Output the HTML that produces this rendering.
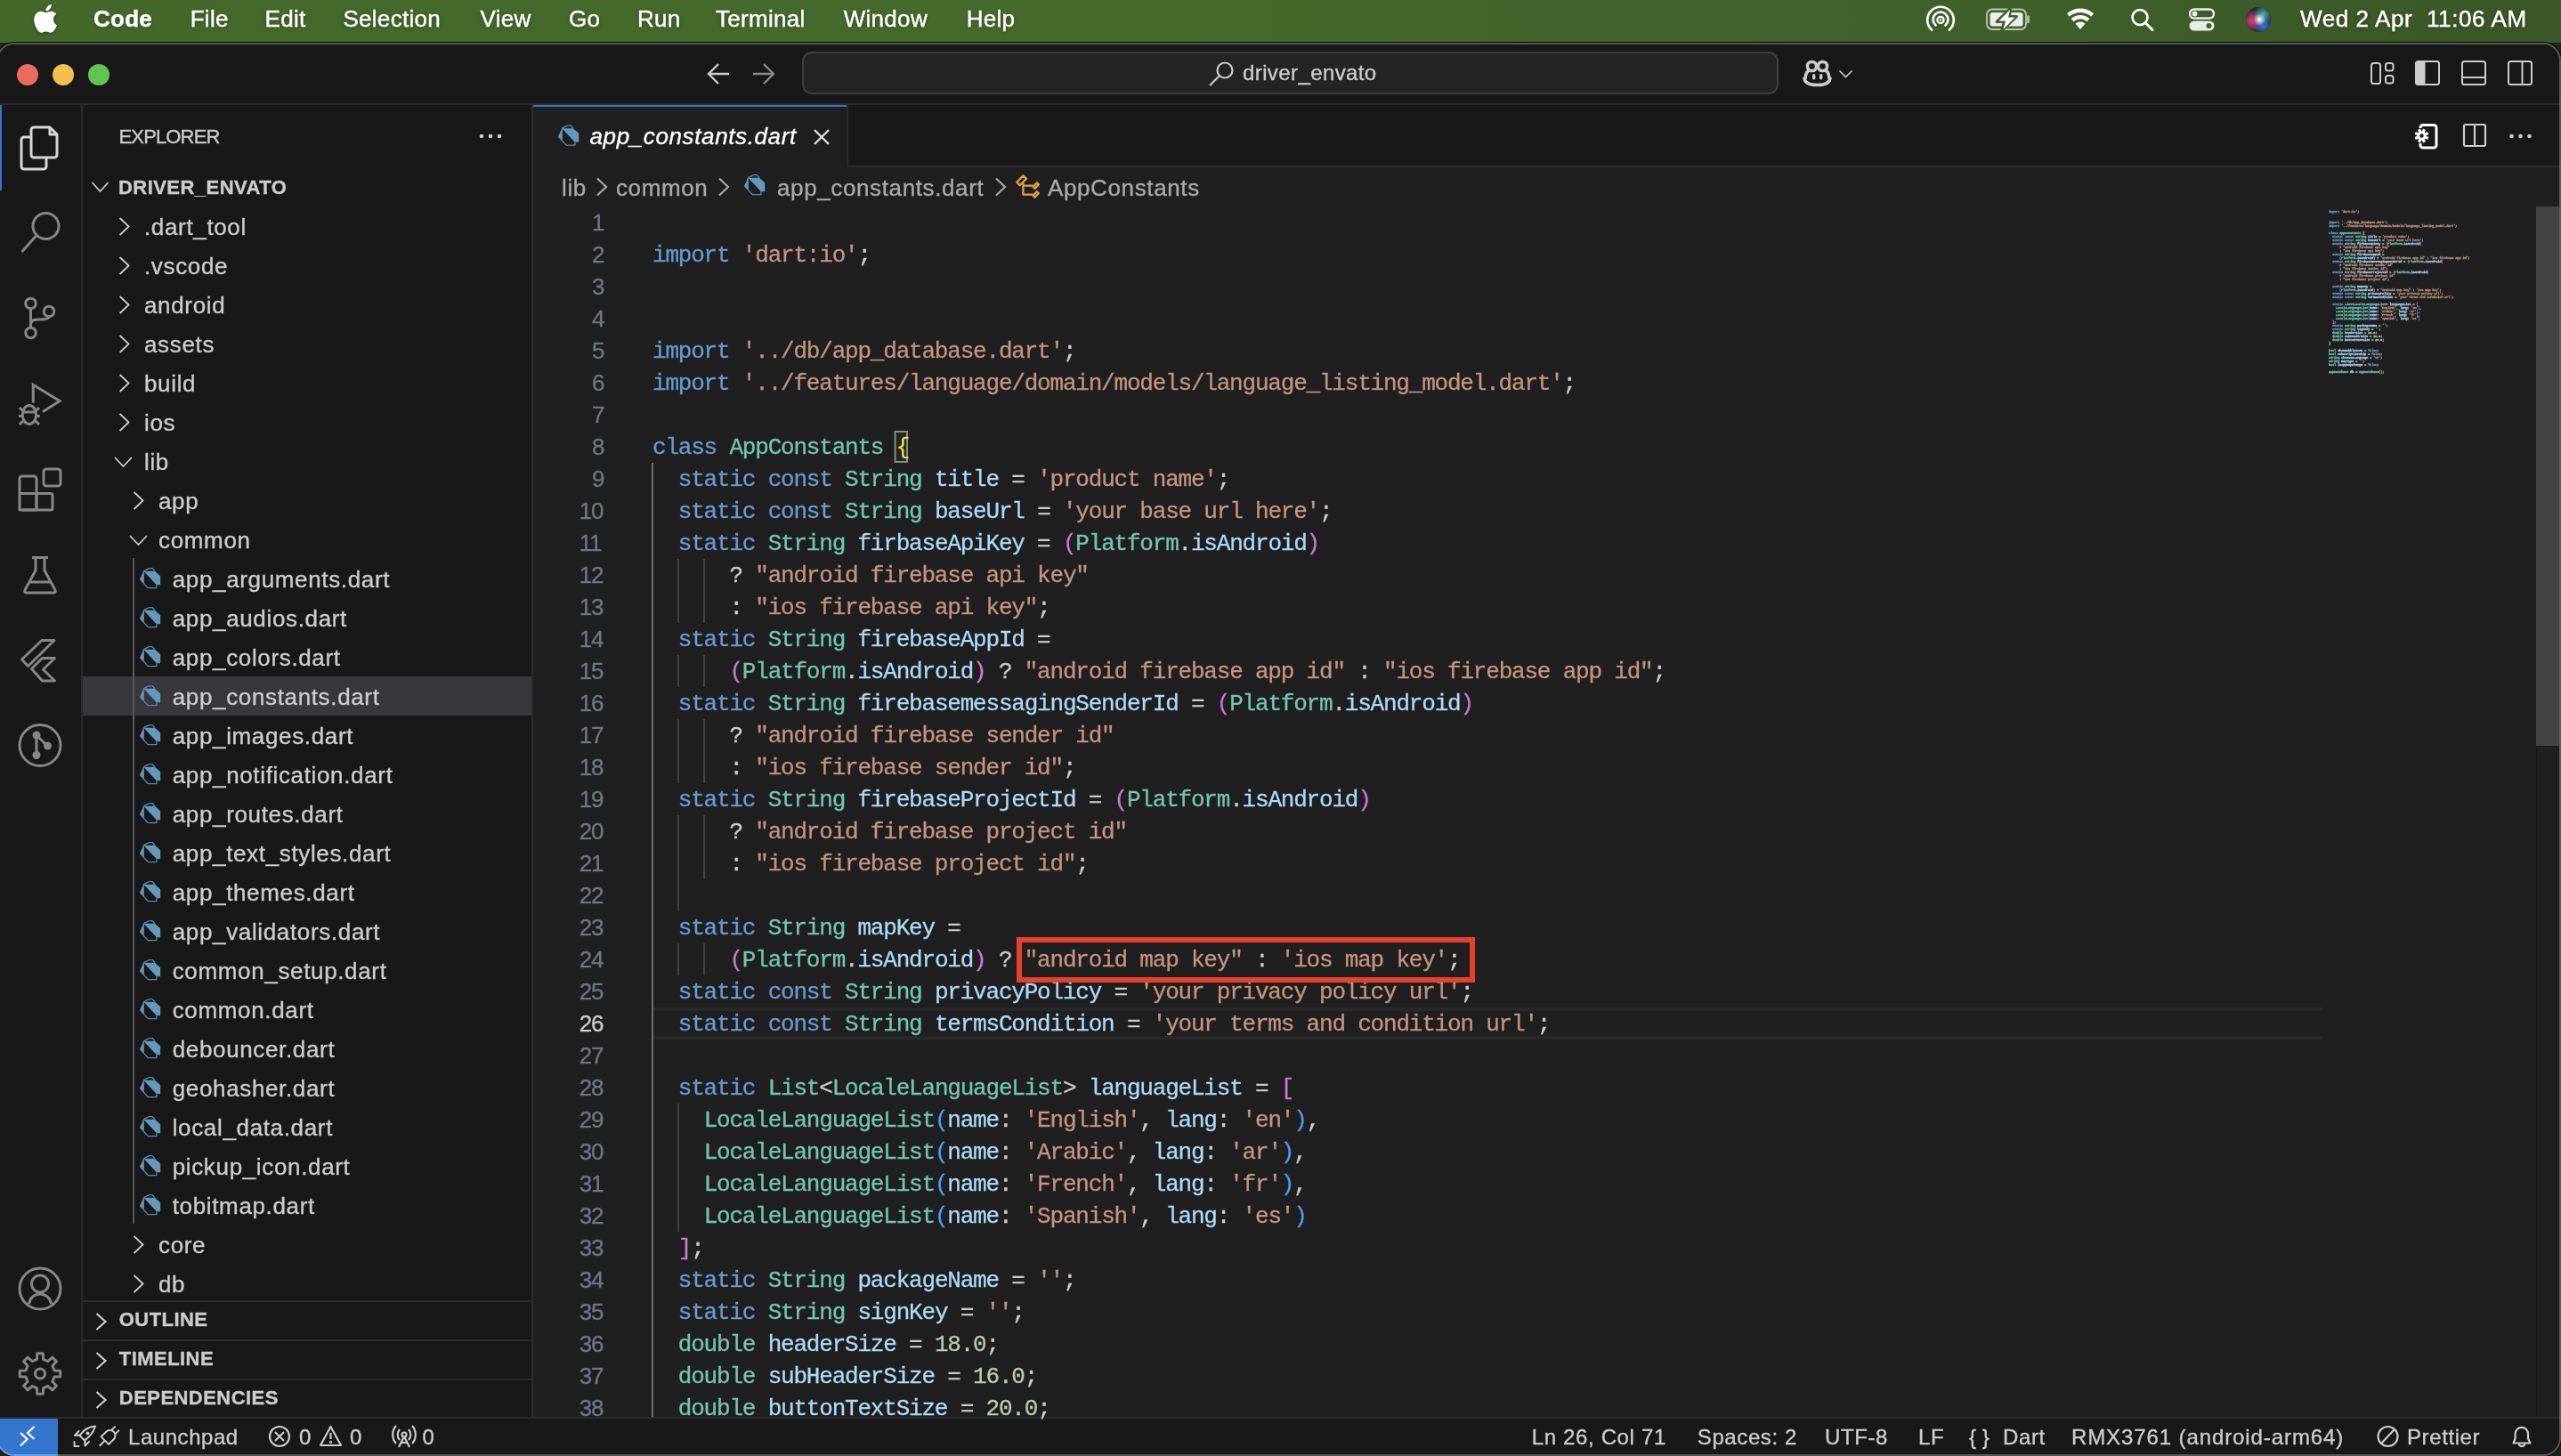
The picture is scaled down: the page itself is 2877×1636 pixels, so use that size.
<!DOCTYPE html>
<html><head><meta charset="utf-8"><style>
html,body{margin:0;padding:0;width:2877px;height:1636px;overflow:hidden;background:#1c2614;}
#menubar{position:absolute;left:0;top:0;width:2877px;height:48px;background:linear-gradient(90deg,#44682a 0%,#466a2b 40%,#41622a 70%,#3b5727 100%);}
#clip{position:absolute;left:-4px;top:48px;width:2881px;height:1588px;border-radius:20px;overflow:hidden;background:#181818;}
#inner{position:absolute;left:4px;top:-48px;width:2877px;height:1636px;will-change:transform;}
.t{position:absolute;white-space:pre;font-family:"Liberation Sans", sans-serif;-webkit-text-stroke:0.35px currentColor;}
.r{position:absolute;}
.code{font-family:"Liberation Mono", monospace;font-size:26px;letter-spacing:-1.2px;line-height:36px;color:#cccccc;-webkit-text-stroke:0.3px currentColor;}
.code span{-webkit-text-stroke:0.3px currentColor;}
#border{position:absolute;left:-4px;top:48px;width:2881px;height:1588px;border-radius:20px;box-sizing:border-box;border:2px solid rgba(255,255,255,0.27);box-shadow:0 0 0 1px rgba(0,0,0,0.85);pointer-events:none;}
svg{position:absolute;left:0;top:0;}
.mm{position:absolute;left:2616px;white-space:pre;font-family:"Liberation Mono", monospace;font-size:4px;line-height:4px;letter-spacing:-0.4px;color:#cccccc;-webkit-text-stroke:0.35px currentColor;opacity:0.9}
#mb .t{text-shadow:0 1px 4px rgba(0,0,0,0.35);-webkit-text-stroke:0.45px #fff;}
</style></head><body>
<div id="menubar"></div>
<div id="mb" style="position:absolute;left:0;top:0;width:2877px;height:48px;will-change:transform;">
<svg width="2877" height="48" viewBox="0 0 2877 48"><path transform="translate(1.5 0)" fill="#ffffff" style="filter:drop-shadow(0 1px 2px rgba(0,0,0,0.35))" d="M58.5 21.8c0-4 3.3-5.9 3.4-6-1.9-2.7-4.8-3.1-5.8-3.1-2.5-.3-4.8 1.4-6.1 1.4-1.3 0-3.2-1.4-5.3-1.4-2.7 0-5.2 1.6-6.6 4-2.8 4.9-.7 12.1 2 16 1.3 1.9 2.9 4.1 5 4 2-.1 2.8-1.3 5.2-1.3 2.4 0 3.1 1.3 5.2 1.3 2.2 0 3.5-2 4.8-3.9 1.5-2.2 2.1-4.4 2.2-4.5-.1 0-4-1.6-4-6.5zM54.6 10c1.1-1.4 1.9-3.2 1.7-5.1-1.6.1-3.6 1.1-4.7 2.5-1 1.2-1.9 3.1-1.7 4.9 1.8.2 3.6-.9 4.7-2.3z"/><g fill="none" stroke="#ffffff" stroke-width="2.6" stroke-linecap="round"><path d="M2170.2 33.6A14.8 14.8 0 1 1 2189.8 33.6"/><path d="M2174.5 28.3A8.4 8.4 0 1 1 2185.5 28.3"/><circle cx="2180" cy="22.4" r="3.6" stroke-width="2.2"/></g><circle cx="2180" cy="22.4" r="1.2" fill="#fff"/><rect x="2232" y="10.5" width="44" height="22.5" rx="6" fill="none" stroke="#b9c4b2" stroke-width="1.8"/><rect x="2235.5" y="14" width="37" height="15.5" rx="3" fill="#ebedea"/><path d="M2278.5 18.5v6.5" stroke="#b9c4b2" stroke-width="2.6" stroke-linecap="round"/><path d="M2258.5 9L2243 24.5H2251.5L2248.5 35L2265.5 18.5H2257.5Z" fill="#3f6028" stroke="#3f6028" stroke-width="3" stroke-linejoin="round"/><path d="M2258 11L2245.5 23.5H2253L2250.5 33L2263.5 19.5H2256Z" fill="#ffffff"/><g fill="#ffffff"><path d="M2337 33l-5.5-6.5a8.5 8.5 0 0 1 11 0z"/><path d="M2329.5 24.2l-2.8-3.3a15.5 15.5 0 0 1 20.6 0l-2.8 3.3a11.2 11.2 0 0 0 -15 0z"/><path d="M2324.8 18.6l-2.9-3.4a23 23 0 0 1 30.2 0l-2.9 3.4a18.5 18.5 0 0 0 -24.4 0z"/></g><circle cx="2404" cy="19.5" r="8.5" fill="none" stroke="#fff" stroke-width="2.6"/><path d="M2410.5 26L2418 33.5" stroke="#fff" stroke-width="3" stroke-linecap="round"/><rect x="2460" y="10.5" width="27" height="10" rx="5" fill="none" stroke="#e9ece7" stroke-width="2.4"/><circle cx="2465.5" cy="15.5" r="3" fill="#e9ece7"/><rect x="2459.5" y="23.5" width="28" height="11" rx="5.5" fill="#e9ece7"/><circle cx="2481.5" cy="29" r="3" fill="#3f6028"/><defs><radialGradient id="sg0" cx="50%" cy="50%" r="50%"><stop offset="0" stop-color="#3a3a5a"/><stop offset="1" stop-color="#222238"/></radialGradient><radialGradient id="sg1" cx="25%" cy="55%" r="45%"><stop offset="0" stop-color="#e8407a" stop-opacity="0.95"/><stop offset="1" stop-color="#e8407a" stop-opacity="0"/></radialGradient><radialGradient id="sg2" cx="70%" cy="30%" r="40%"><stop offset="0" stop-color="#40c8b8" stop-opacity="0.9"/><stop offset="1" stop-color="#40c8b8" stop-opacity="0"/></radialGradient><radialGradient id="sg3" cx="70%" cy="75%" r="40%"><stop offset="0" stop-color="#3a78e8" stop-opacity="0.95"/><stop offset="1" stop-color="#3a78e8" stop-opacity="0"/></radialGradient><radialGradient id="sg4" cx="55%" cy="50%" r="25%"><stop offset="0" stop-color="#ffffff" stop-opacity="1"/><stop offset="1" stop-color="#ffffff" stop-opacity="0"/></radialGradient></defs><circle cx="2537" cy="22" r="14" fill="url(#sg0)"/><circle cx="2537" cy="22" r="14" fill="url(#sg1)"/><circle cx="2537" cy="22" r="14" fill="url(#sg2)"/><circle cx="2537" cy="22" r="14" fill="url(#sg3)"/><circle cx="2537" cy="22" r="14" fill="url(#sg4)"/></svg>
<div class="t" style="left:105.0px;top:-5.5px;font-size:26px;line-height:52px;color:#ffffff;font-weight:bold;font-style:normal;letter-spacing:0.25px;font-family:"Liberation Sans", sans-serif;">Code</div>
<div class="t" style="left:213.7px;top:-5.5px;font-size:26px;line-height:52px;color:#ffffff;font-weight:normal;font-style:normal;letter-spacing:0.3px;font-family:"Liberation Sans", sans-serif;">File</div>
<div class="t" style="left:297.6px;top:-5.5px;font-size:26px;line-height:52px;color:#ffffff;font-weight:normal;font-style:normal;letter-spacing:0.3px;font-family:"Liberation Sans", sans-serif;">Edit</div>
<div class="t" style="left:385.4px;top:-5.5px;font-size:26px;line-height:52px;color:#ffffff;font-weight:normal;font-style:normal;letter-spacing:0.3px;font-family:"Liberation Sans", sans-serif;">Selection</div>
<div class="t" style="left:539.6px;top:-5.5px;font-size:26px;line-height:52px;color:#ffffff;font-weight:normal;font-style:normal;letter-spacing:0.3px;font-family:"Liberation Sans", sans-serif;">View</div>
<div class="t" style="left:639.0px;top:-5.5px;font-size:26px;line-height:52px;color:#ffffff;font-weight:normal;font-style:normal;letter-spacing:0.3px;font-family:"Liberation Sans", sans-serif;">Go</div>
<div class="t" style="left:716.0px;top:-5.5px;font-size:26px;line-height:52px;color:#ffffff;font-weight:normal;font-style:normal;letter-spacing:0.3px;font-family:"Liberation Sans", sans-serif;">Run</div>
<div class="t" style="left:804.0px;top:-5.5px;font-size:26px;line-height:52px;color:#ffffff;font-weight:normal;font-style:normal;letter-spacing:0.3px;font-family:"Liberation Sans", sans-serif;">Terminal</div>
<div class="t" style="left:947.7px;top:-5.5px;font-size:26px;line-height:52px;color:#ffffff;font-weight:normal;font-style:normal;letter-spacing:0.3px;font-family:"Liberation Sans", sans-serif;">Window</div>
<div class="t" style="left:1085.7px;top:-5.5px;font-size:26px;line-height:52px;color:#ffffff;font-weight:normal;font-style:normal;letter-spacing:0.3px;font-family:"Liberation Sans", sans-serif;">Help</div>
<div class="t" style="left:2584.0px;top:-5.0px;font-size:26px;line-height:52px;color:#ffffff;font-weight:normal;font-style:normal;letter-spacing:0.6px;font-family:"Liberation Sans", sans-serif;">Wed 2 Apr  11:06 AM</div>
</div>
<div id="clip"><div id="inner">
<div class="r" style="left:-10px;top:47px;width:2900px;height:70px;background:#181818;"></div>
<div class="r" style="left:-10px;top:116px;width:2900px;height:2px;background:#2b2b2b;"></div>
<div class="r" style="left:0px;top:118px;width:92px;height:1474px;background:#181818;"></div>
<div class="r" style="left:91px;top:118px;width:2px;height:1474px;background:#2b2b2b;"></div>
<div class="r" style="left:93px;top:118px;width:504px;height:1474px;background:#181818;"></div>
<div class="r" style="left:597px;top:118px;width:2px;height:1474px;background:#2b2b2b;"></div>
<div class="r" style="left:599px;top:118px;width:2280px;height:68px;background:#181818;"></div>
<div class="r" style="left:599px;top:186px;width:2280px;height:2px;background:#2b2b2b;"></div>
<div class="r" style="left:599px;top:118px;width:352px;height:70px;background:#1f1f1f;"></div>
<div class="r" style="left:599px;top:118px;width:352px;height:2px;background:#3376cd;"></div>
<div class="r" style="left:951px;top:118px;width:2px;height:68px;background:#2b2b2b;"></div>
<div class="r" style="left:599px;top:188px;width:2280px;height:1404px;background:#1f1f1f;"></div>
<div class="r" style="left:-10px;top:1592px;width:2900px;height:44px;background:#181818;"></div>
<div class="r" style="left:-10px;top:1592px;width:2900px;height:2px;background:#2b2b2b;"></div>
<div class="r" style="left:-10px;top:1594px;width:75px;height:42px;background:#3376cd;"></div>
<div class="r" style="left:0px;top:118px;width:2px;height:96px;background:#3376cd;"></div>
<div class="r" style="left:93px;top:760px;width:504px;height:44px;background:#37373c;"></div>
<div class="r" style="left:149px;top:627px;width:2px;height:748px;background:#585858;"></div>
<div class="r" style="left:93px;top:1461px;width:504px;height:2px;background:#2b2b2b;"></div>
<div class="r" style="left:93px;top:1505px;width:504px;height:2px;background:#2b2b2b;"></div>
<div class="r" style="left:93px;top:1549px;width:504px;height:2px;background:#2b2b2b;"></div>
<div class="r" style="left:732px;top:1132px;width:1877px;height:36px;background:transparent;border-top:4px solid #282828;border-bottom:4px solid #282828;box-sizing:border-box"></div>
<div class="r" style="left:732.0px;top:520px;width:2px;height:36px;background:#6e6e6e;"></div>
<div class="r" style="left:732.0px;top:556px;width:2px;height:36px;background:#6e6e6e;"></div>
<div class="r" style="left:732.0px;top:592px;width:2px;height:36px;background:#6e6e6e;"></div>
<div class="r" style="left:732.0px;top:628px;width:2px;height:36px;background:#6e6e6e;"></div>
<div class="r" style="left:732.0px;top:664px;width:2px;height:36px;background:#6e6e6e;"></div>
<div class="r" style="left:732.0px;top:700px;width:2px;height:36px;background:#6e6e6e;"></div>
<div class="r" style="left:732.0px;top:736px;width:2px;height:36px;background:#6e6e6e;"></div>
<div class="r" style="left:732.0px;top:772px;width:2px;height:36px;background:#6e6e6e;"></div>
<div class="r" style="left:732.0px;top:808px;width:2px;height:36px;background:#6e6e6e;"></div>
<div class="r" style="left:732.0px;top:844px;width:2px;height:36px;background:#6e6e6e;"></div>
<div class="r" style="left:732.0px;top:880px;width:2px;height:36px;background:#6e6e6e;"></div>
<div class="r" style="left:732.0px;top:916px;width:2px;height:36px;background:#6e6e6e;"></div>
<div class="r" style="left:732.0px;top:952px;width:2px;height:36px;background:#6e6e6e;"></div>
<div class="r" style="left:732.0px;top:988px;width:2px;height:36px;background:#6e6e6e;"></div>
<div class="r" style="left:732.0px;top:1024px;width:2px;height:36px;background:#6e6e6e;"></div>
<div class="r" style="left:732.0px;top:1060px;width:2px;height:36px;background:#6e6e6e;"></div>
<div class="r" style="left:732.0px;top:1096px;width:2px;height:36px;background:#6e6e6e;"></div>
<div class="r" style="left:732.0px;top:1132px;width:2px;height:36px;background:#6e6e6e;"></div>
<div class="r" style="left:732.0px;top:1168px;width:2px;height:36px;background:#6e6e6e;"></div>
<div class="r" style="left:732.0px;top:1204px;width:2px;height:36px;background:#6e6e6e;"></div>
<div class="r" style="left:732.0px;top:1240px;width:2px;height:36px;background:#6e6e6e;"></div>
<div class="r" style="left:732.0px;top:1276px;width:2px;height:36px;background:#6e6e6e;"></div>
<div class="r" style="left:732.0px;top:1312px;width:2px;height:36px;background:#6e6e6e;"></div>
<div class="r" style="left:732.0px;top:1348px;width:2px;height:36px;background:#6e6e6e;"></div>
<div class="r" style="left:732.0px;top:1384px;width:2px;height:36px;background:#6e6e6e;"></div>
<div class="r" style="left:732.0px;top:1420px;width:2px;height:36px;background:#6e6e6e;"></div>
<div class="r" style="left:732.0px;top:1456px;width:2px;height:36px;background:#6e6e6e;"></div>
<div class="r" style="left:732.0px;top:1492px;width:2px;height:36px;background:#6e6e6e;"></div>
<div class="r" style="left:732.0px;top:1528px;width:2px;height:36px;background:#6e6e6e;"></div>
<div class="r" style="left:732.0px;top:1564px;width:2px;height:28px;background:#6e6e6e;"></div>
<div class="r" style="left:760.8px;top:628px;width:2px;height:36px;background:#404040;"></div>
<div class="r" style="left:760.8px;top:664px;width:2px;height:36px;background:#404040;"></div>
<div class="r" style="left:760.8px;top:736px;width:2px;height:36px;background:#404040;"></div>
<div class="r" style="left:760.8px;top:808px;width:2px;height:36px;background:#404040;"></div>
<div class="r" style="left:760.8px;top:844px;width:2px;height:36px;background:#404040;"></div>
<div class="r" style="left:760.8px;top:916px;width:2px;height:36px;background:#404040;"></div>
<div class="r" style="left:760.8px;top:952px;width:2px;height:36px;background:#404040;"></div>
<div class="r" style="left:760.8px;top:1060px;width:2px;height:36px;background:#404040;"></div>
<div class="r" style="left:760.8px;top:988px;width:2px;height:36px;background:#404040;"></div>
<div class="r" style="left:760.8px;top:1240px;width:2px;height:36px;background:#404040;"></div>
<div class="r" style="left:760.8px;top:1276px;width:2px;height:36px;background:#404040;"></div>
<div class="r" style="left:760.8px;top:1312px;width:2px;height:36px;background:#404040;"></div>
<div class="r" style="left:760.8px;top:1348px;width:2px;height:36px;background:#404040;"></div>
<div class="r" style="left:789.6px;top:628px;width:2px;height:36px;background:#404040;"></div>
<div class="r" style="left:789.6px;top:664px;width:2px;height:36px;background:#404040;"></div>
<div class="r" style="left:789.6px;top:736px;width:2px;height:36px;background:#404040;"></div>
<div class="r" style="left:789.6px;top:808px;width:2px;height:36px;background:#404040;"></div>
<div class="r" style="left:789.6px;top:844px;width:2px;height:36px;background:#404040;"></div>
<div class="r" style="left:789.6px;top:916px;width:2px;height:36px;background:#404040;"></div>
<div class="r" style="left:789.6px;top:952px;width:2px;height:36px;background:#404040;"></div>
<div class="r" style="left:789.6px;top:1060px;width:2px;height:36px;background:#404040;"></div>
<div class="r" style="left:2849px;top:232px;width:26px;height:606px;background:#434343;"></div>
<div class="r" style="left:2849px;top:838px;width:1px;height:754px;background:#171717;"></div>
<svg width="2877" height="1636" viewBox="0 0 2877 1636"><circle cx="31" cy="84" r="12" fill="#ed6a5e"/><circle cx="71" cy="84" r="12" fill="#f4bf4f"/><circle cx="111" cy="84" r="12" fill="#61c554"/><path d="M819 83H796M807 72L796 83L807 94" stroke="#cccccc" stroke-width="2.4" fill="none"/><path d="M846 83H869M858 72L869 83L858 94" stroke="#8a8a8a" stroke-width="2.4" fill="none"/><rect x="902" y="59" width="1095" height="46" rx="10" fill="#242424" stroke="#3f3f3f" stroke-width="2"/><circle cx="1376" cy="79" r="8.5" stroke="#cccccc" stroke-width="2.2" fill="none"/><path d="M1370 85L1359 96" stroke="#cccccc" stroke-width="2.2"/><g fill="none" stroke="#cccccc" stroke-width="3.6" stroke-linejoin="round"><path d="M2028 89c0-5 1.5-8 4-10M2055 89c0-5-1.5-8-4-10"/><rect x="2030.5" y="69.5" width="10" height="10" rx="4.5"/><rect x="2042.5" y="69.5" width="10" height="10" rx="4.5"/><path d="M2027 87c0 6.5 6 8.5 14.5 8.5s14.5-2 14.5-8.5"/></g><g fill="#cccccc"><rect x="2036" y="83" width="3.4" height="6.5" rx="1.7"/><rect x="2044" y="83" width="3.4" height="6.5" rx="1.7"/></g><path d="M2066.5 79.5L2073.5 86.5L2080.5 79.5" stroke="#cccccc" stroke-width="1.6" fill="none"/><g fill="none" stroke="#cccccc" stroke-width="2"><rect x="2664" y="71" width="10" height="23" rx="2.5"/><rect x="2680" y="71" width="8.5" height="8.5" rx="2.5"/><rect x="2680" y="85" width="8.5" height="8.5" rx="2.5"/><rect x="2714" y="69" width="26" height="26" rx="2.5"/><rect x="2766" y="69" width="26" height="26" rx="2.5"/><path d="M2766 87H2792"/><rect x="2818" y="69" width="26" height="26" rx="2.5"/><path d="M2833.5 69V95"/></g><path d="M2716.5 69H2724.5V95H2716.5A2.5 2.5 0 0 1 2714 92.5V71.5A2.5 2.5 0 0 1 2716.5 69Z" fill="#cccccc"/><g fill="none" stroke="#d7d7d7" stroke-width="3" stroke-linejoin="round"><path d="M35 154H27a3 3 0 0 0-3 3V187a3 3 0 0 0 3 3H49a3 3 0 0 0 3-3V178"/><path d="M38 143H56L64 151V174a3 3 0 0 1-3 3H38a3 3 0 0 1-3-3V146a3 3 0 0 1 3-3Z"/><path d="M56 143V151H64"/></g><g fill="none" stroke="#868686" stroke-width="3"><circle cx="51.5" cy="254" r="14.5"/><path d="M41 264.5L24.5 283"/></g><g fill="none" stroke="#868686" stroke-width="3"><circle cx="34.5" cy="341" r="5.8"/><circle cx="55" cy="350" r="5.8"/><circle cx="34.5" cy="374" r="5.8"/><path d="M34.5 346.8V368.2"/><path d="M34.5 365C34.5 359 39 359 45 359C51 359 55 358 55 355.8"/></g><g fill="none" stroke="#868686" stroke-width="3"><path d="M37.3 452.5V432.5L67 450.5L48 462.8"/><ellipse cx="32.9" cy="466" rx="7.6" ry="10.6"/><path d="M25.5 463H40.3M21.8 458.2L26.2 462.2M44 458.2L39.6 462.2M21 467.4H25.6M40.2 467.4H44.8M21.8 476.8L26.2 472.8M44 476.8L39.6 472.8"/></g><g fill="none" stroke="#868686" stroke-width="3" stroke-linejoin="round"><path d="M22 573V538a3 3 0 0 1 3-3H38a3 3 0 0 1 3 3V573Z"/><path d="M22 554.5H57a2 2 0 0 1 2 2V571a2 2 0 0 1-2 2H25"/><path d="M41 555V573"/><rect x="49" y="527" width="19" height="19" rx="3"/></g><g fill="none" stroke="#868686" stroke-width="3" stroke-linejoin="round"><path d="M36 626.5H54"/><path d="M40 627V641L28 663a2 2 0 0 0 2 3H60a2 2 0 0 0 2-3L50 641V627"/><path d="M33 654H57"/></g><g fill="none" stroke="#868686" stroke-width="3" stroke-linejoin="round"><path d="M24.5 741L47 719.5H61L31.5 748.5Z"/><path d="M35.5 751.5L47.5 739.5H61.5L48.5 752.3L61.5 765H47.5Z"/></g><g fill="none" stroke="#868686" stroke-width="3"><circle cx="45" cy="837.5" r="23"/><path d="M41 826V848.5M41 826L53 838"/></g><g fill="#868686"><circle cx="41" cy="826" r="4.5"/><circle cx="53.5" cy="838" r="4.5"/><circle cx="41" cy="848.5" r="4.5"/></g><g fill="none" stroke="#868686" stroke-width="3"><circle cx="45" cy="1448" r="23"/><circle cx="45" cy="1442.5" r="9.5"/><path d="M32.5 1465a12.6 12.6 0 0 1 25 0"/></g><g fill="none" stroke="#868686" stroke-width="3" stroke-linejoin="round"><path d="M61.1 1539.9 L67.8 1540.3 L67.8 1546.7 L61.1 1547.1 L58.9 1552.3 L63.4 1557.3 L58.8 1561.9 L53.8 1557.4 L48.6 1559.6 L48.2 1566.3 L41.8 1566.3 L41.4 1559.6 L36.2 1557.4 L31.2 1561.9 L26.6 1557.3 L31.1 1552.3 L28.9 1547.1 L22.2 1546.7 L22.2 1540.3 L28.9 1539.9 L31.1 1534.7 L26.6 1529.7 L31.2 1525.1 L36.2 1529.6 L41.4 1527.4 L41.8 1520.7 L48.2 1520.7 L48.6 1527.4 L53.8 1529.6 L58.8 1525.1 L63.4 1529.7 L58.9 1534.7Z"/><circle cx="45" cy="1543.5" r="5.5"/></g><g fill="#cccccc"><circle cx="541" cy="153" r="2.3"/><circle cx="551" cy="153" r="2.3"/><circle cx="561" cy="153" r="2.3"/></g><path d="M103.5 205L112.5 215L121.5 205" stroke="#cccccc" stroke-width="1.8" fill="none"/><path d="M134.6 245L144.6 254.5L134.6 264" stroke="#cccccc" stroke-width="1.8" fill="none"/><path d="M134.6 289L144.6 298.5L134.6 308" stroke="#cccccc" stroke-width="1.8" fill="none"/><path d="M134.6 333L144.6 342.5L134.6 352" stroke="#cccccc" stroke-width="1.8" fill="none"/><path d="M134.6 377L144.6 386.5L134.6 396" stroke="#cccccc" stroke-width="1.8" fill="none"/><path d="M134.6 421L144.6 430.5L134.6 440" stroke="#cccccc" stroke-width="1.8" fill="none"/><path d="M134.6 465L144.6 474.5L134.6 484" stroke="#cccccc" stroke-width="1.8" fill="none"/><path d="M129.0 514L138.5 524L148.0 514" stroke="#cccccc" stroke-width="1.8" fill="none"/><path d="M150.6 553L160.6 562.5L150.6 572" stroke="#cccccc" stroke-width="1.8" fill="none"/><path d="M146.0 602L155.5 612L165.0 602" stroke="#cccccc" stroke-width="1.8" fill="none"/><path fill="#6399bf" d="M161.3 641.7L174.0 641.7L180.2 647.3L180.2 657.2L175.9 657.2Z"/><path fill="#6399bf" d="M161.3 641.7L157.0 651.0L161.3 655.5Z"/><path fill="none" stroke="#5889ad" stroke-width="1.3" d="M161.3 641.7L167.5 638.6L171.2 638.6L174.0 641.7M157.5 651.0L166.3 660.6L175.9 660.6L175.9 657.2M161.3 641.7L161.3 655.5"/><path fill="#6399bf" d="M161.3 685.7L174.0 685.7L180.2 691.3L180.2 701.2L175.9 701.2Z"/><path fill="#6399bf" d="M161.3 685.7L157.0 695.0L161.3 699.5Z"/><path fill="none" stroke="#5889ad" stroke-width="1.3" d="M161.3 685.7L167.5 682.6L171.2 682.6L174.0 685.7M157.5 695.0L166.3 704.6L175.9 704.6L175.9 701.2M161.3 685.7L161.3 699.5"/><path fill="#6399bf" d="M161.3 729.7L174.0 729.7L180.2 735.3L180.2 745.2L175.9 745.2Z"/><path fill="#6399bf" d="M161.3 729.7L157.0 739.0L161.3 743.5Z"/><path fill="none" stroke="#5889ad" stroke-width="1.3" d="M161.3 729.7L167.5 726.6L171.2 726.6L174.0 729.7M157.5 739.0L166.3 748.6L175.9 748.6L175.9 745.2M161.3 729.7L161.3 743.5"/><path fill="#6399bf" d="M161.3 773.7L174.0 773.7L180.2 779.3L180.2 789.2L175.9 789.2Z"/><path fill="#6399bf" d="M161.3 773.7L157.0 783.0L161.3 787.5Z"/><path fill="none" stroke="#5889ad" stroke-width="1.3" d="M161.3 773.7L167.5 770.6L171.2 770.6L174.0 773.7M157.5 783.0L166.3 792.6L175.9 792.6L175.9 789.2M161.3 773.7L161.3 787.5"/><path fill="#6399bf" d="M161.3 817.7L174.0 817.7L180.2 823.3L180.2 833.2L175.9 833.2Z"/><path fill="#6399bf" d="M161.3 817.7L157.0 827.0L161.3 831.5Z"/><path fill="none" stroke="#5889ad" stroke-width="1.3" d="M161.3 817.7L167.5 814.6L171.2 814.6L174.0 817.7M157.5 827.0L166.3 836.6L175.9 836.6L175.9 833.2M161.3 817.7L161.3 831.5"/><path fill="#6399bf" d="M161.3 861.7L174.0 861.7L180.2 867.3L180.2 877.2L175.9 877.2Z"/><path fill="#6399bf" d="M161.3 861.7L157.0 871.0L161.3 875.5Z"/><path fill="none" stroke="#5889ad" stroke-width="1.3" d="M161.3 861.7L167.5 858.6L171.2 858.6L174.0 861.7M157.5 871.0L166.3 880.6L175.9 880.6L175.9 877.2M161.3 861.7L161.3 875.5"/><path fill="#6399bf" d="M161.3 905.7L174.0 905.7L180.2 911.3L180.2 921.2L175.9 921.2Z"/><path fill="#6399bf" d="M161.3 905.7L157.0 915.0L161.3 919.5Z"/><path fill="none" stroke="#5889ad" stroke-width="1.3" d="M161.3 905.7L167.5 902.6L171.2 902.6L174.0 905.7M157.5 915.0L166.3 924.6L175.9 924.6L175.9 921.2M161.3 905.7L161.3 919.5"/><path fill="#6399bf" d="M161.3 949.7L174.0 949.7L180.2 955.3L180.2 965.2L175.9 965.2Z"/><path fill="#6399bf" d="M161.3 949.7L157.0 959.0L161.3 963.5Z"/><path fill="none" stroke="#5889ad" stroke-width="1.3" d="M161.3 949.7L167.5 946.6L171.2 946.6L174.0 949.7M157.5 959.0L166.3 968.6L175.9 968.6L175.9 965.2M161.3 949.7L161.3 963.5"/><path fill="#6399bf" d="M161.3 993.7L174.0 993.7L180.2 999.3L180.2 1009.2L175.9 1009.2Z"/><path fill="#6399bf" d="M161.3 993.7L157.0 1003.0L161.3 1007.5Z"/><path fill="none" stroke="#5889ad" stroke-width="1.3" d="M161.3 993.7L167.5 990.6L171.2 990.6L174.0 993.7M157.5 1003.0L166.3 1012.6L175.9 1012.6L175.9 1009.2M161.3 993.7L161.3 1007.5"/><path fill="#6399bf" d="M161.3 1037.7L174.0 1037.7L180.2 1043.3L180.2 1053.2L175.9 1053.2Z"/><path fill="#6399bf" d="M161.3 1037.7L157.0 1047.0L161.3 1051.5Z"/><path fill="none" stroke="#5889ad" stroke-width="1.3" d="M161.3 1037.7L167.5 1034.6L171.2 1034.6L174.0 1037.7M157.5 1047.0L166.3 1056.6L175.9 1056.6L175.9 1053.2M161.3 1037.7L161.3 1051.5"/><path fill="#6399bf" d="M161.3 1081.7L174.0 1081.7L180.2 1087.3L180.2 1097.2L175.9 1097.2Z"/><path fill="#6399bf" d="M161.3 1081.7L157.0 1091.0L161.3 1095.5Z"/><path fill="none" stroke="#5889ad" stroke-width="1.3" d="M161.3 1081.7L167.5 1078.6L171.2 1078.6L174.0 1081.7M157.5 1091.0L166.3 1100.6L175.9 1100.6L175.9 1097.2M161.3 1081.7L161.3 1095.5"/><path fill="#6399bf" d="M161.3 1125.7L174.0 1125.7L180.2 1131.3L180.2 1141.2L175.9 1141.2Z"/><path fill="#6399bf" d="M161.3 1125.7L157.0 1135.0L161.3 1139.5Z"/><path fill="none" stroke="#5889ad" stroke-width="1.3" d="M161.3 1125.7L167.5 1122.6L171.2 1122.6L174.0 1125.7M157.5 1135.0L166.3 1144.6L175.9 1144.6L175.9 1141.2M161.3 1125.7L161.3 1139.5"/><path fill="#6399bf" d="M161.3 1169.7L174.0 1169.7L180.2 1175.3L180.2 1185.2L175.9 1185.2Z"/><path fill="#6399bf" d="M161.3 1169.7L157.0 1179.0L161.3 1183.5Z"/><path fill="none" stroke="#5889ad" stroke-width="1.3" d="M161.3 1169.7L167.5 1166.6L171.2 1166.6L174.0 1169.7M157.5 1179.0L166.3 1188.6L175.9 1188.6L175.9 1185.2M161.3 1169.7L161.3 1183.5"/><path fill="#6399bf" d="M161.3 1213.7L174.0 1213.7L180.2 1219.3L180.2 1229.2L175.9 1229.2Z"/><path fill="#6399bf" d="M161.3 1213.7L157.0 1223.0L161.3 1227.5Z"/><path fill="none" stroke="#5889ad" stroke-width="1.3" d="M161.3 1213.7L167.5 1210.6L171.2 1210.6L174.0 1213.7M157.5 1223.0L166.3 1232.6L175.9 1232.6L175.9 1229.2M161.3 1213.7L161.3 1227.5"/><path fill="#6399bf" d="M161.3 1257.7L174.0 1257.7L180.2 1263.3L180.2 1273.2L175.9 1273.2Z"/><path fill="#6399bf" d="M161.3 1257.7L157.0 1267.0L161.3 1271.5Z"/><path fill="none" stroke="#5889ad" stroke-width="1.3" d="M161.3 1257.7L167.5 1254.6L171.2 1254.6L174.0 1257.7M157.5 1267.0L166.3 1276.6L175.9 1276.6L175.9 1273.2M161.3 1257.7L161.3 1271.5"/><path fill="#6399bf" d="M161.3 1301.7L174.0 1301.7L180.2 1307.3L180.2 1317.2L175.9 1317.2Z"/><path fill="#6399bf" d="M161.3 1301.7L157.0 1311.0L161.3 1315.5Z"/><path fill="none" stroke="#5889ad" stroke-width="1.3" d="M161.3 1301.7L167.5 1298.6L171.2 1298.6L174.0 1301.7M157.5 1311.0L166.3 1320.6L175.9 1320.6L175.9 1317.2M161.3 1301.7L161.3 1315.5"/><path fill="#6399bf" d="M161.3 1345.7L174.0 1345.7L180.2 1351.3L180.2 1361.2L175.9 1361.2Z"/><path fill="#6399bf" d="M161.3 1345.7L157.0 1355.0L161.3 1359.5Z"/><path fill="none" stroke="#5889ad" stroke-width="1.3" d="M161.3 1345.7L167.5 1342.6L171.2 1342.6L174.0 1345.7M157.5 1355.0L166.3 1364.6L175.9 1364.6L175.9 1361.2M161.3 1345.7L161.3 1359.5"/><path d="M150.6 1389L160.6 1398.5L150.6 1408" stroke="#cccccc" stroke-width="1.8" fill="none"/><path d="M150.6 1433L160.6 1442.5L150.6 1452" stroke="#cccccc" stroke-width="1.8" fill="none"/><path d="M108.5 1476L118.5 1485L108.5 1494" stroke="#cccccc" stroke-width="2.2" fill="none"/><path d="M108.5 1520L118.5 1529L108.5 1538" stroke="#cccccc" stroke-width="2.2" fill="none"/><path d="M108.5 1564L118.5 1573L108.5 1582" stroke="#cccccc" stroke-width="2.2" fill="none"/><path fill="#6399bf" d="M631.3 144.2L644.0 144.2L650.2 149.8L650.2 159.7L645.9 159.7Z"/><path fill="#6399bf" d="M631.3 144.2L627.0 153.5L631.3 158.0Z"/><path fill="none" stroke="#5889ad" stroke-width="1.3" d="M631.3 144.2L637.5 141.1L641.2 141.1L644.0 144.2M627.5 153.5L636.3 163.1L645.9 163.1L645.9 159.7M631.3 144.2L631.3 158.0"/><path d="M915 146L931 162M931 146L915 162" stroke="#e0e0e0" stroke-width="2.4"/><g fill="none" stroke="#ffffff" stroke-width="3"><path d="M2722 140.5H2734a3 3 0 0 1 3 3V163a3 3 0 0 1-3 3H2722a3 3 0 0 1-3-3V161"/><path d="M2719 144V143.5a3 3 0 0 1 3-3"/></g><path fill="#ffffff" fill-rule="evenodd" d="M2725.7 153.0 L2728.4 154.0 L2727.1 157.0 L2724.5 155.8 L2723.8 156.5 L2725.0 159.1 L2722.0 160.4 L2721.0 157.7 L2720.0 157.7 L2719.0 160.4 L2716.0 159.1 L2717.2 156.5 L2716.5 155.8 L2713.9 157.0 L2712.6 154.0 L2715.3 153.0 L2715.3 152.0 L2712.6 151.0 L2713.9 148.0 L2716.5 149.2 L2717.2 148.5 L2716.0 145.9 L2719.0 144.6 L2720.0 147.3 L2721.0 147.3 L2722.0 144.6 L2725.0 145.9 L2723.8 148.5 L2724.5 149.2 L2727.1 148.0 L2728.4 151.0 L2725.7 152.0Z M2722.7 152.5 a2.2 2.2 0 1 0 -4.4 0 a2.2 2.2 0 1 0 4.4 0Z"/><g fill="none" stroke="#cccccc" stroke-width="2.2"><rect x="2768" y="140" width="24" height="24" rx="2"/><path d="M2780 140V164"/></g><g fill="#cccccc"><circle cx="2821.5" cy="153" r="2.3"/><circle cx="2831.5" cy="153" r="2.3"/><circle cx="2841.5" cy="153" r="2.3"/></g><path d="M671 200.5L681 210L671 219.5" stroke="#a9a9a9" stroke-width="2.2" fill="none"/><path d="M808 200.5L818 210L808 219.5" stroke="#a9a9a9" stroke-width="2.2" fill="none"/><path fill="#6399bf" d="M840.3 199.7L853.0 199.7L859.2 205.3L859.2 215.2L854.9 215.2Z"/><path fill="#6399bf" d="M840.3 199.7L836.0 209.0L840.3 213.5Z"/><path fill="none" stroke="#5889ad" stroke-width="1.3" d="M840.3 199.7L846.5 196.6L850.2 196.6L853.0 199.7M836.5 209.0L845.3 218.6L854.9 218.6L854.9 215.2M840.3 199.7L840.3 213.5"/><path d="M1119 200.5L1129 210L1119 219.5" stroke="#a9a9a9" stroke-width="2.2" fill="none"/><g fill="none" stroke="#e2a144" stroke-width="2.3" stroke-linejoin="round"><path d="M1142.3 204.8L1149.4 197.4L1153 200.9L1145.6 208.2Z"/><path d="M1160.6 209.8L1164.9 205.4L1166.8 207.4L1162.4 211.9Z"/><path d="M1160.6 219.6L1164.9 215.3L1166.8 217.3L1162.4 221.7Z"/><path d="M1149.4 205.5V218.6H1160.4M1149.4 208.7H1160.4"/></g><rect x="1005.6" y="485.0" width="13.4" height="34" fill="#1f2a1c" stroke="#8a8a8a" stroke-width="2"/><path d="M23 1610L30.5 1617L23 1624.5M38.5 1603L31 1610L38.5 1617" stroke="#ffffff" stroke-width="2.2" fill="none"/><g fill="none" stroke="#cccccc" stroke-width="2" stroke-linejoin="round" stroke-linecap="round"><path d="M107 1602.5C100 1603 94 1606.5 89.5 1613L95 1618.5C101.5 1614 105 1609 107 1602.5Z"/><path d="M90 1612.5L84 1613L88.5 1608"/><path d="M95.5 1618L95.5 1624.5L100 1620"/><path d="M83.5 1620V1625H88.5"/></g><circle cx="98.5" cy="1610.5" r="2" fill="#cccccc"/><g transform="translate(123.5 1613) rotate(-45)" fill="none" stroke="#cccccc" stroke-width="2" stroke-linejoin="round" stroke-linecap="round"><path d="M-16 0H-8"/><path d="M-8 -6H0A6 6 0 0 1 0 6H-8Z"/><path d="M6 -3H11M6 3H11"/></g><g fill="none" stroke="#cccccc" stroke-width="2.2"><circle cx="314" cy="1614" r="11"/><path d="M309 1609L319 1619M319 1609L309 1619"/><path d="M371.5 1603L383 1624H360Z" stroke-linejoin="round"/><path d="M371.5 1610V1617"/><circle cx="371.5" cy="1620.5" r="0.6"/></g><g fill="none" stroke="#cccccc" stroke-width="2.2"><path d="M449 1606a9 9 0 0 0 0 12M459 1606a9 9 0 0 1 0 12M445 1602a15 15 0 0 0 0 20M463 1602a15 15 0 0 1 0 20"/><circle cx="454" cy="1612" r="2.5"/><path d="M454 1614L448 1626M454 1614L460 1626M450 1621H458"/></g><g fill="none" stroke="#cccccc" stroke-width="2.2"><circle cx="2682.5" cy="1614" r="11"/><path d="M2675 1622L2690 1606"/></g><g fill="none" stroke="#cccccc" stroke-width="2.2" stroke-linejoin="round"><path d="M2823.5 1621.5H2842.5L2840 1616.5V1611a7.2 7.2 0 0 0-14.4 0V1616.5Z"/><path d="M2829.8 1622a3.2 3.2 0 0 0 6.4 0"/></g></svg>
<div class="t" style="left:1396.0px;top:57.5px;font-size:24px;line-height:48px;color:#cccccc;font-weight:normal;font-style:normal;letter-spacing:0.4px;font-family:"Liberation Sans", sans-serif;">driver_envato</div>
<div class="t" style="left:133.5px;top:131.5px;font-size:22px;line-height:44px;color:#cccccc;font-weight:normal;font-style:normal;letter-spacing:-0.85px;font-family:"Liberation Sans", sans-serif;">EXPLORER</div>
<div class="t" style="left:133.0px;top:189.0px;font-size:22px;line-height:44px;color:#cccccc;font-weight:bold;font-style:normal;letter-spacing:0.45px;font-family:"Liberation Sans", sans-serif;">DRIVER_ENVATO</div>
<div class="r" style="left:93px;top:231px;width:504px;height:1230px;overflow:hidden">
<div class="t" style="left:69.0px;top:-2.0px;font-size:26px;line-height:52px;color:#cccccc;font-weight:normal;font-style:normal;letter-spacing:0.65px;font-family:"Liberation Sans", sans-serif;">.dart_tool</div>
<div class="t" style="left:69.0px;top:42.0px;font-size:26px;line-height:52px;color:#cccccc;font-weight:normal;font-style:normal;letter-spacing:0.65px;font-family:"Liberation Sans", sans-serif;">.vscode</div>
<div class="t" style="left:69.0px;top:86.0px;font-size:26px;line-height:52px;color:#cccccc;font-weight:normal;font-style:normal;letter-spacing:0.65px;font-family:"Liberation Sans", sans-serif;">android</div>
<div class="t" style="left:69.0px;top:130.0px;font-size:26px;line-height:52px;color:#cccccc;font-weight:normal;font-style:normal;letter-spacing:0.65px;font-family:"Liberation Sans", sans-serif;">assets</div>
<div class="t" style="left:69.0px;top:174.0px;font-size:26px;line-height:52px;color:#cccccc;font-weight:normal;font-style:normal;letter-spacing:0.65px;font-family:"Liberation Sans", sans-serif;">build</div>
<div class="t" style="left:69.0px;top:218.0px;font-size:26px;line-height:52px;color:#cccccc;font-weight:normal;font-style:normal;letter-spacing:0.65px;font-family:"Liberation Sans", sans-serif;">ios</div>
<div class="t" style="left:69.0px;top:262.0px;font-size:26px;line-height:52px;color:#cccccc;font-weight:normal;font-style:normal;letter-spacing:0.65px;font-family:"Liberation Sans", sans-serif;">lib</div>
<div class="t" style="left:85.0px;top:306.0px;font-size:26px;line-height:52px;color:#cccccc;font-weight:normal;font-style:normal;letter-spacing:0.65px;font-family:"Liberation Sans", sans-serif;">app</div>
<div class="t" style="left:85.0px;top:350.0px;font-size:26px;line-height:52px;color:#cccccc;font-weight:normal;font-style:normal;letter-spacing:0.65px;font-family:"Liberation Sans", sans-serif;">common</div>
<div class="t" style="left:100.7px;top:394.0px;font-size:26px;line-height:52px;color:#cccccc;font-weight:normal;font-style:normal;letter-spacing:0.65px;font-family:"Liberation Sans", sans-serif;">app_arguments.dart</div>
<div class="t" style="left:100.7px;top:438.0px;font-size:26px;line-height:52px;color:#cccccc;font-weight:normal;font-style:normal;letter-spacing:0.65px;font-family:"Liberation Sans", sans-serif;">app_audios.dart</div>
<div class="t" style="left:100.7px;top:482.0px;font-size:26px;line-height:52px;color:#cccccc;font-weight:normal;font-style:normal;letter-spacing:0.65px;font-family:"Liberation Sans", sans-serif;">app_colors.dart</div>
<div class="t" style="left:100.7px;top:526.0px;font-size:26px;line-height:52px;color:#cccccc;font-weight:normal;font-style:normal;letter-spacing:0.65px;font-family:"Liberation Sans", sans-serif;">app_constants.dart</div>
<div class="t" style="left:100.7px;top:570.0px;font-size:26px;line-height:52px;color:#cccccc;font-weight:normal;font-style:normal;letter-spacing:0.65px;font-family:"Liberation Sans", sans-serif;">app_images.dart</div>
<div class="t" style="left:100.7px;top:614.0px;font-size:26px;line-height:52px;color:#cccccc;font-weight:normal;font-style:normal;letter-spacing:0.65px;font-family:"Liberation Sans", sans-serif;">app_notification.dart</div>
<div class="t" style="left:100.7px;top:658.0px;font-size:26px;line-height:52px;color:#cccccc;font-weight:normal;font-style:normal;letter-spacing:0.65px;font-family:"Liberation Sans", sans-serif;">app_routes.dart</div>
<div class="t" style="left:100.7px;top:702.0px;font-size:26px;line-height:52px;color:#cccccc;font-weight:normal;font-style:normal;letter-spacing:0.65px;font-family:"Liberation Sans", sans-serif;">app_text_styles.dart</div>
<div class="t" style="left:100.7px;top:746.0px;font-size:26px;line-height:52px;color:#cccccc;font-weight:normal;font-style:normal;letter-spacing:0.65px;font-family:"Liberation Sans", sans-serif;">app_themes.dart</div>
<div class="t" style="left:100.7px;top:790.0px;font-size:26px;line-height:52px;color:#cccccc;font-weight:normal;font-style:normal;letter-spacing:0.65px;font-family:"Liberation Sans", sans-serif;">app_validators.dart</div>
<div class="t" style="left:100.7px;top:834.0px;font-size:26px;line-height:52px;color:#cccccc;font-weight:normal;font-style:normal;letter-spacing:0.65px;font-family:"Liberation Sans", sans-serif;">common_setup.dart</div>
<div class="t" style="left:100.7px;top:878.0px;font-size:26px;line-height:52px;color:#cccccc;font-weight:normal;font-style:normal;letter-spacing:0.65px;font-family:"Liberation Sans", sans-serif;">common.dart</div>
<div class="t" style="left:100.7px;top:922.0px;font-size:26px;line-height:52px;color:#cccccc;font-weight:normal;font-style:normal;letter-spacing:0.65px;font-family:"Liberation Sans", sans-serif;">debouncer.dart</div>
<div class="t" style="left:100.7px;top:966.0px;font-size:26px;line-height:52px;color:#cccccc;font-weight:normal;font-style:normal;letter-spacing:0.65px;font-family:"Liberation Sans", sans-serif;">geohasher.dart</div>
<div class="t" style="left:100.7px;top:1010.0px;font-size:26px;line-height:52px;color:#cccccc;font-weight:normal;font-style:normal;letter-spacing:0.65px;font-family:"Liberation Sans", sans-serif;">local_data.dart</div>
<div class="t" style="left:100.7px;top:1054.0px;font-size:26px;line-height:52px;color:#cccccc;font-weight:normal;font-style:normal;letter-spacing:0.65px;font-family:"Liberation Sans", sans-serif;">pickup_icon.dart</div>
<div class="t" style="left:100.7px;top:1098.0px;font-size:26px;line-height:52px;color:#cccccc;font-weight:normal;font-style:normal;letter-spacing:0.65px;font-family:"Liberation Sans", sans-serif;">tobitmap.dart</div>
<div class="t" style="left:85.0px;top:1142.0px;font-size:26px;line-height:52px;color:#cccccc;font-weight:normal;font-style:normal;letter-spacing:0.65px;font-family:"Liberation Sans", sans-serif;">core</div>
<div class="t" style="left:85.0px;top:1186.0px;font-size:26px;line-height:52px;color:#cccccc;font-weight:normal;font-style:normal;letter-spacing:0.65px;font-family:"Liberation Sans", sans-serif;">db</div>
</div>
<div class="t" style="left:133.8px;top:1461.0px;font-size:22px;line-height:44px;color:#cccccc;font-weight:bold;font-style:normal;letter-spacing:0.45px;font-family:"Liberation Sans", sans-serif;">OUTLINE</div>
<div class="t" style="left:133.8px;top:1505.0px;font-size:22px;line-height:44px;color:#cccccc;font-weight:bold;font-style:normal;letter-spacing:0.45px;font-family:"Liberation Sans", sans-serif;">TIMELINE</div>
<div class="t" style="left:133.8px;top:1549.0px;font-size:22px;line-height:44px;color:#cccccc;font-weight:bold;font-style:normal;letter-spacing:0.45px;font-family:"Liberation Sans", sans-serif;">DEPENDENCIES</div>
<div class="t" style="left:662.5px;top:127.0px;font-size:26px;line-height:52px;color:#ffffff;font-weight:normal;font-style:italic;letter-spacing:0.62px;font-family:"Liberation Sans", sans-serif;">app_constants.dart</div>
<div class="t" style="left:631.0px;top:185.0px;font-size:26px;line-height:52px;color:#a9a9a9;font-weight:normal;font-style:normal;letter-spacing:0.6px;font-family:"Liberation Sans", sans-serif;">lib</div>
<div class="t" style="left:692.0px;top:185.0px;font-size:26px;line-height:52px;color:#a9a9a9;font-weight:normal;font-style:normal;letter-spacing:0.6px;font-family:"Liberation Sans", sans-serif;">common</div>
<div class="t" style="left:873.0px;top:185.0px;font-size:26px;line-height:52px;color:#a9a9a9;font-weight:normal;font-style:normal;letter-spacing:0.62px;font-family:"Liberation Sans", sans-serif;">app_constants.dart</div>
<div class="t" style="left:1177.0px;top:185.0px;font-size:26px;line-height:52px;color:#a9a9a9;font-weight:normal;font-style:normal;letter-spacing:0.62px;font-family:"Liberation Sans", sans-serif;">AppConstants</div>
<div class="t" style="left:665.1px;top:224.4px;font-size:26px;line-height:52px;color:#6f7680;font-weight:normal;font-style:normal;letter-spacing:-1.2px;font-family:"Liberation Mono", monospace;-webkit-text-stroke:0.3px #6f7680">1</div>
<div class="t code" style="left:733px;top:232.9px"></div>
<div class="t" style="left:665.1px;top:260.4px;font-size:26px;line-height:52px;color:#6f7680;font-weight:normal;font-style:normal;letter-spacing:-1.2px;font-family:"Liberation Mono", monospace;-webkit-text-stroke:0.3px #6f7680">2</div>
<div class="t code" style="left:733px;top:268.9px"><span style="color:#679ad1">import</span> <span style="color:#c5947c">&#x27;dart:io&#x27;</span><span style="color:#cccccc">;</span></div>
<div class="t" style="left:665.1px;top:296.4px;font-size:26px;line-height:52px;color:#6f7680;font-weight:normal;font-style:normal;letter-spacing:-1.2px;font-family:"Liberation Mono", monospace;-webkit-text-stroke:0.3px #6f7680">3</div>
<div class="t code" style="left:733px;top:304.9px"></div>
<div class="t" style="left:665.1px;top:332.4px;font-size:26px;line-height:52px;color:#6f7680;font-weight:normal;font-style:normal;letter-spacing:-1.2px;font-family:"Liberation Mono", monospace;-webkit-text-stroke:0.3px #6f7680">4</div>
<div class="t code" style="left:733px;top:340.9px"></div>
<div class="t" style="left:665.1px;top:368.4px;font-size:26px;line-height:52px;color:#6f7680;font-weight:normal;font-style:normal;letter-spacing:-1.2px;font-family:"Liberation Mono", monospace;-webkit-text-stroke:0.3px #6f7680">5</div>
<div class="t code" style="left:733px;top:376.9px"><span style="color:#679ad1">import</span> <span style="color:#c5947c">&#x27;../db/app_database.dart&#x27;</span><span style="color:#cccccc">;</span></div>
<div class="t" style="left:665.1px;top:404.4px;font-size:26px;line-height:52px;color:#6f7680;font-weight:normal;font-style:normal;letter-spacing:-1.2px;font-family:"Liberation Mono", monospace;-webkit-text-stroke:0.3px #6f7680">6</div>
<div class="t code" style="left:733px;top:412.9px"><span style="color:#679ad1">import</span> <span style="color:#c5947c">&#x27;../features/language/domain/models/language_listing_model.dart&#x27;</span><span style="color:#cccccc">;</span></div>
<div class="t" style="left:665.1px;top:440.4px;font-size:26px;line-height:52px;color:#6f7680;font-weight:normal;font-style:normal;letter-spacing:-1.2px;font-family:"Liberation Mono", monospace;-webkit-text-stroke:0.3px #6f7680">7</div>
<div class="t code" style="left:733px;top:448.9px"></div>
<div class="t" style="left:665.1px;top:476.4px;font-size:26px;line-height:52px;color:#6f7680;font-weight:normal;font-style:normal;letter-spacing:-1.2px;font-family:"Liberation Mono", monospace;-webkit-text-stroke:0.3px #6f7680">8</div>
<div class="t code" style="left:733px;top:484.9px"><span style="color:#679ad1">class</span> <span style="color:#71c6b1">AppConstants</span> <span style="color:#f9d849">{</span></div>
<div class="t" style="left:665.1px;top:512.4px;font-size:26px;line-height:52px;color:#6f7680;font-weight:normal;font-style:normal;letter-spacing:-1.2px;font-family:"Liberation Mono", monospace;-webkit-text-stroke:0.3px #6f7680">9</div>
<div class="t code" style="left:733px;top:520.9px">  <span style="color:#679ad1">static</span> <span style="color:#679ad1">const</span> <span style="color:#71c6b1">String</span> <span style="color:#aadafa">title</span> <span style="color:#cccccc">=</span> <span style="color:#c5947c">&#x27;product name&#x27;</span><span style="color:#cccccc">;</span></div>
<div class="t" style="left:650.7px;top:548.4px;font-size:26px;line-height:52px;color:#6f7680;font-weight:normal;font-style:normal;letter-spacing:-1.2px;font-family:"Liberation Mono", monospace;-webkit-text-stroke:0.3px #6f7680">10</div>
<div class="t code" style="left:733px;top:556.9px">  <span style="color:#679ad1">static</span> <span style="color:#679ad1">const</span> <span style="color:#71c6b1">String</span> <span style="color:#aadafa">baseUrl</span> <span style="color:#cccccc">=</span> <span style="color:#c5947c">&#x27;your base url here&#x27;</span><span style="color:#cccccc">;</span></div>
<div class="t" style="left:650.7px;top:584.4px;font-size:26px;line-height:52px;color:#6f7680;font-weight:normal;font-style:normal;letter-spacing:-1.2px;font-family:"Liberation Mono", monospace;-webkit-text-stroke:0.3px #6f7680">11</div>
<div class="t code" style="left:733px;top:592.9px">  <span style="color:#679ad1">static</span> <span style="color:#71c6b1">String</span> <span style="color:#aadafa">firbaseApiKey</span> <span style="color:#cccccc">=</span> <span style="color:#cc76d1">(</span><span style="color:#71c6b1">Platform</span><span style="color:#cccccc">.</span><span style="color:#aadafa">isAndroid</span><span style="color:#cc76d1">)</span></div>
<div class="t" style="left:650.7px;top:620.4px;font-size:26px;line-height:52px;color:#6f7680;font-weight:normal;font-style:normal;letter-spacing:-1.2px;font-family:"Liberation Mono", monospace;-webkit-text-stroke:0.3px #6f7680">12</div>
<div class="t code" style="left:733px;top:628.9px">      <span style="color:#cccccc">?</span> <span style="color:#c5947c">&quot;android firebase api key&quot;</span></div>
<div class="t" style="left:650.7px;top:656.4px;font-size:26px;line-height:52px;color:#6f7680;font-weight:normal;font-style:normal;letter-spacing:-1.2px;font-family:"Liberation Mono", monospace;-webkit-text-stroke:0.3px #6f7680">13</div>
<div class="t code" style="left:733px;top:664.9px">      <span style="color:#cccccc">:</span> <span style="color:#c5947c">&quot;ios firebase api key&quot;</span><span style="color:#cccccc">;</span></div>
<div class="t" style="left:650.7px;top:692.4px;font-size:26px;line-height:52px;color:#6f7680;font-weight:normal;font-style:normal;letter-spacing:-1.2px;font-family:"Liberation Mono", monospace;-webkit-text-stroke:0.3px #6f7680">14</div>
<div class="t code" style="left:733px;top:700.9px">  <span style="color:#679ad1">static</span> <span style="color:#71c6b1">String</span> <span style="color:#aadafa">firebaseAppId</span> <span style="color:#cccccc">=</span></div>
<div class="t" style="left:650.7px;top:728.4px;font-size:26px;line-height:52px;color:#6f7680;font-weight:normal;font-style:normal;letter-spacing:-1.2px;font-family:"Liberation Mono", monospace;-webkit-text-stroke:0.3px #6f7680">15</div>
<div class="t code" style="left:733px;top:736.9px">      <span style="color:#cc76d1">(</span><span style="color:#71c6b1">Platform</span><span style="color:#cccccc">.</span><span style="color:#aadafa">isAndroid</span><span style="color:#cc76d1">)</span> <span style="color:#cccccc">?</span> <span style="color:#c5947c">&quot;android firebase app id&quot;</span> <span style="color:#cccccc">:</span> <span style="color:#c5947c">&quot;ios firebase app id&quot;</span><span style="color:#cccccc">;</span></div>
<div class="t" style="left:650.7px;top:764.4px;font-size:26px;line-height:52px;color:#6f7680;font-weight:normal;font-style:normal;letter-spacing:-1.2px;font-family:"Liberation Mono", monospace;-webkit-text-stroke:0.3px #6f7680">16</div>
<div class="t code" style="left:733px;top:772.9px">  <span style="color:#679ad1">static</span> <span style="color:#71c6b1">String</span> <span style="color:#aadafa">firebasemessagingSenderId</span> <span style="color:#cccccc">=</span> <span style="color:#cc76d1">(</span><span style="color:#71c6b1">Platform</span><span style="color:#cccccc">.</span><span style="color:#aadafa">isAndroid</span><span style="color:#cc76d1">)</span></div>
<div class="t" style="left:650.7px;top:800.4px;font-size:26px;line-height:52px;color:#6f7680;font-weight:normal;font-style:normal;letter-spacing:-1.2px;font-family:"Liberation Mono", monospace;-webkit-text-stroke:0.3px #6f7680">17</div>
<div class="t code" style="left:733px;top:808.9px">      <span style="color:#cccccc">?</span> <span style="color:#c5947c">&quot;android firebase sender id&quot;</span></div>
<div class="t" style="left:650.7px;top:836.4px;font-size:26px;line-height:52px;color:#6f7680;font-weight:normal;font-style:normal;letter-spacing:-1.2px;font-family:"Liberation Mono", monospace;-webkit-text-stroke:0.3px #6f7680">18</div>
<div class="t code" style="left:733px;top:844.9px">      <span style="color:#cccccc">:</span> <span style="color:#c5947c">&quot;ios firebase sender id&quot;</span><span style="color:#cccccc">;</span></div>
<div class="t" style="left:650.7px;top:872.4px;font-size:26px;line-height:52px;color:#6f7680;font-weight:normal;font-style:normal;letter-spacing:-1.2px;font-family:"Liberation Mono", monospace;-webkit-text-stroke:0.3px #6f7680">19</div>
<div class="t code" style="left:733px;top:880.9px">  <span style="color:#679ad1">static</span> <span style="color:#71c6b1">String</span> <span style="color:#aadafa">firebaseProjectId</span> <span style="color:#cccccc">=</span> <span style="color:#cc76d1">(</span><span style="color:#71c6b1">Platform</span><span style="color:#cccccc">.</span><span style="color:#aadafa">isAndroid</span><span style="color:#cc76d1">)</span></div>
<div class="t" style="left:650.7px;top:908.4px;font-size:26px;line-height:52px;color:#6f7680;font-weight:normal;font-style:normal;letter-spacing:-1.2px;font-family:"Liberation Mono", monospace;-webkit-text-stroke:0.3px #6f7680">20</div>
<div class="t code" style="left:733px;top:916.9px">      <span style="color:#cccccc">?</span> <span style="color:#c5947c">&quot;android firebase project id&quot;</span></div>
<div class="t" style="left:650.7px;top:944.4px;font-size:26px;line-height:52px;color:#6f7680;font-weight:normal;font-style:normal;letter-spacing:-1.2px;font-family:"Liberation Mono", monospace;-webkit-text-stroke:0.3px #6f7680">21</div>
<div class="t code" style="left:733px;top:952.9px">      <span style="color:#cccccc">:</span> <span style="color:#c5947c">&quot;ios firebase project id&quot;</span><span style="color:#cccccc">;</span></div>
<div class="t" style="left:650.7px;top:980.4px;font-size:26px;line-height:52px;color:#6f7680;font-weight:normal;font-style:normal;letter-spacing:-1.2px;font-family:"Liberation Mono", monospace;-webkit-text-stroke:0.3px #6f7680">22</div>
<div class="t code" style="left:733px;top:988.9px"></div>
<div class="t" style="left:650.7px;top:1016.4px;font-size:26px;line-height:52px;color:#6f7680;font-weight:normal;font-style:normal;letter-spacing:-1.2px;font-family:"Liberation Mono", monospace;-webkit-text-stroke:0.3px #6f7680">23</div>
<div class="t code" style="left:733px;top:1024.9px">  <span style="color:#679ad1">static</span> <span style="color:#71c6b1">String</span> <span style="color:#aadafa">mapKey</span> <span style="color:#cccccc">=</span></div>
<div class="t" style="left:650.7px;top:1052.4px;font-size:26px;line-height:52px;color:#6f7680;font-weight:normal;font-style:normal;letter-spacing:-1.2px;font-family:"Liberation Mono", monospace;-webkit-text-stroke:0.3px #6f7680">24</div>
<div class="t code" style="left:733px;top:1060.9px">      <span style="color:#cc76d1">(</span><span style="color:#71c6b1">Platform</span><span style="color:#cccccc">.</span><span style="color:#aadafa">isAndroid</span><span style="color:#cc76d1">)</span> <span style="color:#cccccc">?</span> <span style="color:#c5947c">&quot;android map key&quot;</span> <span style="color:#cccccc">:</span> <span style="color:#c5947c">&#x27;ios map key&#x27;</span><span style="color:#cccccc">;</span></div>
<div class="t" style="left:650.7px;top:1088.4px;font-size:26px;line-height:52px;color:#6f7680;font-weight:normal;font-style:normal;letter-spacing:-1.2px;font-family:"Liberation Mono", monospace;-webkit-text-stroke:0.3px #6f7680">25</div>
<div class="t code" style="left:733px;top:1096.9px">  <span style="color:#679ad1">static</span> <span style="color:#679ad1">const</span> <span style="color:#71c6b1">String</span> <span style="color:#aadafa">privacyPolicy</span> <span style="color:#cccccc">=</span> <span style="color:#c5947c">&#x27;your privacy policy url&#x27;</span><span style="color:#cccccc">;</span></div>
<div class="t" style="left:650.7px;top:1124.4px;font-size:26px;line-height:52px;color:#cccccc;font-weight:normal;font-style:normal;letter-spacing:-1.2px;font-family:"Liberation Mono", monospace;-webkit-text-stroke:0.3px #cccccc">26</div>
<div class="t code" style="left:733px;top:1132.9px">  <span style="color:#679ad1">static</span> <span style="color:#679ad1">const</span> <span style="color:#71c6b1">String</span> <span style="color:#aadafa">termsCondition</span> <span style="color:#cccccc">=</span> <span style="color:#c5947c">&#x27;your terms and condition url&#x27;</span><span style="color:#cccccc">;</span></div>
<div class="t" style="left:650.7px;top:1160.4px;font-size:26px;line-height:52px;color:#6f7680;font-weight:normal;font-style:normal;letter-spacing:-1.2px;font-family:"Liberation Mono", monospace;-webkit-text-stroke:0.3px #6f7680">27</div>
<div class="t code" style="left:733px;top:1168.9px"></div>
<div class="t" style="left:650.7px;top:1196.4px;font-size:26px;line-height:52px;color:#6f7680;font-weight:normal;font-style:normal;letter-spacing:-1.2px;font-family:"Liberation Mono", monospace;-webkit-text-stroke:0.3px #6f7680">28</div>
<div class="t code" style="left:733px;top:1204.9px">  <span style="color:#679ad1">static</span> <span style="color:#71c6b1">List</span><span style="color:#cccccc">&lt;</span><span style="color:#71c6b1">LocaleLanguageList</span><span style="color:#cccccc">&gt;</span> <span style="color:#aadafa">languageList</span> <span style="color:#cccccc">=</span> <span style="color:#cc76d1">[</span></div>
<div class="t" style="left:650.7px;top:1232.4px;font-size:26px;line-height:52px;color:#6f7680;font-weight:normal;font-style:normal;letter-spacing:-1.2px;font-family:"Liberation Mono", monospace;-webkit-text-stroke:0.3px #6f7680">29</div>
<div class="t code" style="left:733px;top:1240.9px">    <span style="color:#71c6b1">LocaleLanguageList</span><span style="color:#4a9df8">(</span><span style="color:#aadafa">name</span><span style="color:#cccccc">:</span> <span style="color:#c5947c">&#x27;English&#x27;</span><span style="color:#cccccc">,</span> <span style="color:#aadafa">lang</span><span style="color:#cccccc">:</span> <span style="color:#c5947c">&#x27;en&#x27;</span><span style="color:#4a9df8">)</span><span style="color:#cccccc">,</span></div>
<div class="t" style="left:650.7px;top:1268.4px;font-size:26px;line-height:52px;color:#6f7680;font-weight:normal;font-style:normal;letter-spacing:-1.2px;font-family:"Liberation Mono", monospace;-webkit-text-stroke:0.3px #6f7680">30</div>
<div class="t code" style="left:733px;top:1276.9px">    <span style="color:#71c6b1">LocaleLanguageList</span><span style="color:#4a9df8">(</span><span style="color:#aadafa">name</span><span style="color:#cccccc">:</span> <span style="color:#c5947c">&#x27;Arabic&#x27;</span><span style="color:#cccccc">,</span> <span style="color:#aadafa">lang</span><span style="color:#cccccc">:</span> <span style="color:#c5947c">&#x27;ar&#x27;</span><span style="color:#4a9df8">)</span><span style="color:#cccccc">,</span></div>
<div class="t" style="left:650.7px;top:1304.4px;font-size:26px;line-height:52px;color:#6f7680;font-weight:normal;font-style:normal;letter-spacing:-1.2px;font-family:"Liberation Mono", monospace;-webkit-text-stroke:0.3px #6f7680">31</div>
<div class="t code" style="left:733px;top:1312.9px">    <span style="color:#71c6b1">LocaleLanguageList</span><span style="color:#4a9df8">(</span><span style="color:#aadafa">name</span><span style="color:#cccccc">:</span> <span style="color:#c5947c">&#x27;French&#x27;</span><span style="color:#cccccc">,</span> <span style="color:#aadafa">lang</span><span style="color:#cccccc">:</span> <span style="color:#c5947c">&#x27;fr&#x27;</span><span style="color:#4a9df8">)</span><span style="color:#cccccc">,</span></div>
<div class="t" style="left:650.7px;top:1340.4px;font-size:26px;line-height:52px;color:#6f7680;font-weight:normal;font-style:normal;letter-spacing:-1.2px;font-family:"Liberation Mono", monospace;-webkit-text-stroke:0.3px #6f7680">32</div>
<div class="t code" style="left:733px;top:1348.9px">    <span style="color:#71c6b1">LocaleLanguageList</span><span style="color:#4a9df8">(</span><span style="color:#aadafa">name</span><span style="color:#cccccc">:</span> <span style="color:#c5947c">&#x27;Spanish&#x27;</span><span style="color:#cccccc">,</span> <span style="color:#aadafa">lang</span><span style="color:#cccccc">:</span> <span style="color:#c5947c">&#x27;es&#x27;</span><span style="color:#4a9df8">)</span></div>
<div class="t" style="left:650.7px;top:1376.4px;font-size:26px;line-height:52px;color:#6f7680;font-weight:normal;font-style:normal;letter-spacing:-1.2px;font-family:"Liberation Mono", monospace;-webkit-text-stroke:0.3px #6f7680">33</div>
<div class="t code" style="left:733px;top:1384.9px">  <span style="color:#cc76d1">]</span><span style="color:#cccccc">;</span></div>
<div class="t" style="left:650.7px;top:1412.4px;font-size:26px;line-height:52px;color:#6f7680;font-weight:normal;font-style:normal;letter-spacing:-1.2px;font-family:"Liberation Mono", monospace;-webkit-text-stroke:0.3px #6f7680">34</div>
<div class="t code" style="left:733px;top:1420.9px">  <span style="color:#679ad1">static</span> <span style="color:#71c6b1">String</span> <span style="color:#aadafa">packageName</span> <span style="color:#cccccc">=</span> <span style="color:#c5947c">&#x27;&#x27;</span><span style="color:#cccccc">;</span></div>
<div class="t" style="left:650.7px;top:1448.4px;font-size:26px;line-height:52px;color:#6f7680;font-weight:normal;font-style:normal;letter-spacing:-1.2px;font-family:"Liberation Mono", monospace;-webkit-text-stroke:0.3px #6f7680">35</div>
<div class="t code" style="left:733px;top:1456.9px">  <span style="color:#679ad1">static</span> <span style="color:#71c6b1">String</span> <span style="color:#aadafa">signKey</span> <span style="color:#cccccc">=</span> <span style="color:#c5947c">&#x27;&#x27;</span><span style="color:#cccccc">;</span></div>
<div class="t" style="left:650.7px;top:1484.4px;font-size:26px;line-height:52px;color:#6f7680;font-weight:normal;font-style:normal;letter-spacing:-1.2px;font-family:"Liberation Mono", monospace;-webkit-text-stroke:0.3px #6f7680">36</div>
<div class="t code" style="left:733px;top:1492.9px">  <span style="color:#71c6b1">double</span> <span style="color:#aadafa">headerSize</span> <span style="color:#cccccc">=</span> <span style="color:#bacdab">18.0</span><span style="color:#cccccc">;</span></div>
<div class="t" style="left:650.7px;top:1520.4px;font-size:26px;line-height:52px;color:#6f7680;font-weight:normal;font-style:normal;letter-spacing:-1.2px;font-family:"Liberation Mono", monospace;-webkit-text-stroke:0.3px #6f7680">37</div>
<div class="t code" style="left:733px;top:1528.9px">  <span style="color:#71c6b1">double</span> <span style="color:#aadafa">subHeaderSize</span> <span style="color:#cccccc">=</span> <span style="color:#bacdab">16.0</span><span style="color:#cccccc">;</span></div>
<div class="t" style="left:650.7px;top:1556.4px;font-size:26px;line-height:52px;color:#6f7680;font-weight:normal;font-style:normal;letter-spacing:-1.2px;font-family:"Liberation Mono", monospace;-webkit-text-stroke:0.3px #6f7680">38</div>
<div class="t code" style="left:733px;top:1564.9px">  <span style="color:#71c6b1">double</span> <span style="color:#aadafa">buttonTextSize</span> <span style="color:#cccccc">=</span> <span style="color:#bacdab">20.0</span><span style="color:#cccccc">;</span></div>
<div class="r" style="left:1141.7px;top:1053px;width:515.3px;height:50.8px;background:transparent;border:6px solid #e5412c;box-sizing:border-box"></div>
<div style="position:absolute;left:0;top:0"><div class="mm" style="top:231.6px"></div><div class="mm" style="top:235.6px"><span style="color:#679ad1">import</span> <span style="color:#c5947c">&#x27;dart:io&#x27;</span><span style="color:#cccccc">;</span></div><div class="mm" style="top:239.6px"></div><div class="mm" style="top:243.6px"></div><div class="mm" style="top:247.6px"><span style="color:#679ad1">import</span> <span style="color:#c5947c">&#x27;../db/app_database.dart&#x27;</span><span style="color:#cccccc">;</span></div><div class="mm" style="top:251.6px"><span style="color:#679ad1">import</span> <span style="color:#c5947c">&#x27;../features/language/domain/models/language_listing_model.dart&#x27;</span><span style="color:#cccccc">;</span></div><div class="mm" style="top:255.6px"></div><div class="mm" style="top:259.6px"><span style="color:#679ad1">class</span> <span style="color:#71c6b1">AppConstants</span> <span style="color:#f9d849">{</span></div><div class="mm" style="top:263.6px">  <span style="color:#679ad1">static</span> <span style="color:#679ad1">const</span> <span style="color:#71c6b1">String</span> <span style="color:#aadafa">title</span> <span style="color:#cccccc">=</span> <span style="color:#c5947c">&#x27;product name&#x27;</span><span style="color:#cccccc">;</span></div><div class="mm" style="top:267.6px">  <span style="color:#679ad1">static</span> <span style="color:#679ad1">const</span> <span style="color:#71c6b1">String</span> <span style="color:#aadafa">baseUrl</span> <span style="color:#cccccc">=</span> <span style="color:#c5947c">&#x27;your base url here&#x27;</span><span style="color:#cccccc">;</span></div><div class="mm" style="top:271.6px">  <span style="color:#679ad1">static</span> <span style="color:#71c6b1">String</span> <span style="color:#aadafa">firbaseApiKey</span> <span style="color:#cccccc">=</span> <span style="color:#cc76d1">(</span><span style="color:#71c6b1">Platform</span><span style="color:#cccccc">.</span><span style="color:#aadafa">isAndroid</span><span style="color:#cc76d1">)</span></div><div class="mm" style="top:275.6px">      <span style="color:#cccccc">?</span> <span style="color:#c5947c">&quot;android firebase api key&quot;</span></div><div class="mm" style="top:279.6px">      <span style="color:#cccccc">:</span> <span style="color:#c5947c">&quot;ios firebase api key&quot;</span><span style="color:#cccccc">;</span></div><div class="mm" style="top:283.6px">  <span style="color:#679ad1">static</span> <span style="color:#71c6b1">String</span> <span style="color:#aadafa">firebaseAppId</span> <span style="color:#cccccc">=</span></div><div class="mm" style="top:287.6px">      <span style="color:#cc76d1">(</span><span style="color:#71c6b1">Platform</span><span style="color:#cccccc">.</span><span style="color:#aadafa">isAndroid</span><span style="color:#cc76d1">)</span> <span style="color:#cccccc">?</span> <span style="color:#c5947c">&quot;android firebase app id&quot;</span> <span style="color:#cccccc">:</span> <span style="color:#c5947c">&quot;ios firebase app id&quot;</span><span style="color:#cccccc">;</span></div><div class="mm" style="top:291.6px">  <span style="color:#679ad1">static</span> <span style="color:#71c6b1">String</span> <span style="color:#aadafa">firebasemessagingSenderId</span> <span style="color:#cccccc">=</span> <span style="color:#cc76d1">(</span><span style="color:#71c6b1">Platform</span><span style="color:#cccccc">.</span><span style="color:#aadafa">isAndroid</span><span style="color:#cc76d1">)</span></div><div class="mm" style="top:295.6px">      <span style="color:#cccccc">?</span> <span style="color:#c5947c">&quot;android firebase sender id&quot;</span></div><div class="mm" style="top:299.6px">      <span style="color:#cccccc">:</span> <span style="color:#c5947c">&quot;ios firebase sender id&quot;</span><span style="color:#cccccc">;</span></div><div class="mm" style="top:303.6px">  <span style="color:#679ad1">static</span> <span style="color:#71c6b1">String</span> <span style="color:#aadafa">firebaseProjectId</span> <span style="color:#cccccc">=</span> <span style="color:#cc76d1">(</span><span style="color:#71c6b1">Platform</span><span style="color:#cccccc">.</span><span style="color:#aadafa">isAndroid</span><span style="color:#cc76d1">)</span></div><div class="mm" style="top:307.6px">      <span style="color:#cccccc">?</span> <span style="color:#c5947c">&quot;android firebase project id&quot;</span></div><div class="mm" style="top:311.6px">      <span style="color:#cccccc">:</span> <span style="color:#c5947c">&quot;ios firebase project id&quot;</span><span style="color:#cccccc">;</span></div><div class="mm" style="top:315.6px"></div><div class="mm" style="top:319.6px">  <span style="color:#679ad1">static</span> <span style="color:#71c6b1">String</span> <span style="color:#aadafa">mapKey</span> <span style="color:#cccccc">=</span></div><div class="mm" style="top:323.6px">      <span style="color:#cc76d1">(</span><span style="color:#71c6b1">Platform</span><span style="color:#cccccc">.</span><span style="color:#aadafa">isAndroid</span><span style="color:#cc76d1">)</span> <span style="color:#cccccc">?</span> <span style="color:#c5947c">&quot;android map key&quot;</span> <span style="color:#cccccc">:</span> <span style="color:#c5947c">&#x27;ios map key&#x27;</span><span style="color:#cccccc">;</span></div><div class="mm" style="top:327.6px">  <span style="color:#679ad1">static</span> <span style="color:#679ad1">const</span> <span style="color:#71c6b1">String</span> <span style="color:#aadafa">privacyPolicy</span> <span style="color:#cccccc">=</span> <span style="color:#c5947c">&#x27;your privacy policy url&#x27;</span><span style="color:#cccccc">;</span></div><div class="mm" style="top:331.6px">  <span style="color:#679ad1">static</span> <span style="color:#679ad1">const</span> <span style="color:#71c6b1">String</span> <span style="color:#aadafa">termsCondition</span> <span style="color:#cccccc">=</span> <span style="color:#c5947c">&#x27;your terms and condition url&#x27;</span><span style="color:#cccccc">;</span></div><div class="mm" style="top:335.6px"></div><div class="mm" style="top:339.6px">  <span style="color:#679ad1">static</span> <span style="color:#71c6b1">List</span><span style="color:#cccccc">&lt;</span><span style="color:#71c6b1">LocaleLanguageList</span><span style="color:#cccccc">&gt;</span> <span style="color:#aadafa">languageList</span> <span style="color:#cccccc">=</span> <span style="color:#cc76d1">[</span></div><div class="mm" style="top:343.6px">    <span style="color:#71c6b1">LocaleLanguageList</span><span style="color:#4a9df8">(</span><span style="color:#aadafa">name</span><span style="color:#cccccc">:</span> <span style="color:#c5947c">&#x27;English&#x27;</span><span style="color:#cccccc">,</span> <span style="color:#aadafa">lang</span><span style="color:#cccccc">:</span> <span style="color:#c5947c">&#x27;en&#x27;</span><span style="color:#4a9df8">)</span><span style="color:#cccccc">,</span></div><div class="mm" style="top:347.6px">    <span style="color:#71c6b1">LocaleLanguageList</span><span style="color:#4a9df8">(</span><span style="color:#aadafa">name</span><span style="color:#cccccc">:</span> <span style="color:#c5947c">&#x27;Arabic&#x27;</span><span style="color:#cccccc">,</span> <span style="color:#aadafa">lang</span><span style="color:#cccccc">:</span> <span style="color:#c5947c">&#x27;ar&#x27;</span><span style="color:#4a9df8">)</span><span style="color:#cccccc">,</span></div><div class="mm" style="top:351.6px">    <span style="color:#71c6b1">LocaleLanguageList</span><span style="color:#4a9df8">(</span><span style="color:#aadafa">name</span><span style="color:#cccccc">:</span> <span style="color:#c5947c">&#x27;French&#x27;</span><span style="color:#cccccc">,</span> <span style="color:#aadafa">lang</span><span style="color:#cccccc">:</span> <span style="color:#c5947c">&#x27;fr&#x27;</span><span style="color:#4a9df8">)</span><span style="color:#cccccc">,</span></div><div class="mm" style="top:355.6px">    <span style="color:#71c6b1">LocaleLanguageList</span><span style="color:#4a9df8">(</span><span style="color:#aadafa">name</span><span style="color:#cccccc">:</span> <span style="color:#c5947c">&#x27;Spanish&#x27;</span><span style="color:#cccccc">,</span> <span style="color:#aadafa">lang</span><span style="color:#cccccc">:</span> <span style="color:#c5947c">&#x27;es&#x27;</span><span style="color:#4a9df8">)</span></div><div class="mm" style="top:359.6px">  <span style="color:#cc76d1">]</span><span style="color:#cccccc">;</span></div><div class="mm" style="top:363.6px">  <span style="color:#679ad1">static</span> <span style="color:#71c6b1">String</span> <span style="color:#aadafa">packageName</span> <span style="color:#cccccc">=</span> <span style="color:#c5947c">&#x27;&#x27;</span><span style="color:#cccccc">;</span></div><div class="mm" style="top:367.6px">  <span style="color:#679ad1">static</span> <span style="color:#71c6b1">String</span> <span style="color:#aadafa">signKey</span> <span style="color:#cccccc">=</span> <span style="color:#c5947c">&#x27;&#x27;</span><span style="color:#cccccc">;</span></div><div class="mm" style="top:371.6px">  <span style="color:#71c6b1">double</span> <span style="color:#aadafa">headerSize</span> <span style="color:#cccccc">=</span> <span style="color:#bacdab">18.0</span><span style="color:#cccccc">;</span></div><div class="mm" style="top:375.6px">  <span style="color:#71c6b1">double</span> <span style="color:#aadafa">subHeaderSize</span> <span style="color:#cccccc">=</span> <span style="color:#bacdab">16.0</span><span style="color:#cccccc">;</span></div><div class="mm" style="top:379.6px">  <span style="color:#71c6b1">double</span> <span style="color:#aadafa">buttonTextSize</span> <span style="color:#cccccc">=</span> <span style="color:#bacdab">20.0</span><span style="color:#cccccc">;</span></div><div class="mm" style="top:383.6px"><span style="color:#f9d849">}</span></div><div class="mm" style="top:387.6px"></div><div class="mm" style="top:391.6px"><span style="color:#71c6b1">bool</span> <span style="color:#aadafa">showBubbleIcon</span> <span style="color:#cccccc">=</span> <span style="color:#679ad1">false</span><span style="color:#cccccc">;</span></div><div class="mm" style="top:395.6px"><span style="color:#71c6b1">bool</span> <span style="color:#aadafa">subscriptionShip</span> <span style="color:#cccccc">=</span> <span style="color:#679ad1">false</span><span style="color:#cccccc">;</span></div><div class="mm" style="top:399.6px"><span style="color:#71c6b1">String</span> <span style="color:#aadafa">choosenLanguage</span> <span style="color:#cccccc">=</span> <span style="color:#c5947c">&#x27;en&#x27;</span><span style="color:#cccccc">;</span></div><div class="mm" style="top:403.6px"><span style="color:#71c6b1">String</span> <span style="color:#aadafa">mapType</span> <span style="color:#cccccc">=</span> <span style="color:#c5947c">&#x27;&#x27;</span><span style="color:#cccccc">;</span></div><div class="mm" style="top:407.6px"><span style="color:#71c6b1">bool</span> <span style="color:#aadafa">isAppMapChange</span> <span style="color:#cccccc">=</span> <span style="color:#679ad1">false</span><span style="color:#cccccc">;</span></div><div class="mm" style="top:411.6px"></div><div class="mm" style="top:415.6px"><span style="color:#71c6b1">AppDatabase</span> <span style="color:#aadafa">db</span> <span style="color:#cccccc">=</span> <span style="color:#71c6b1">AppDatabase</span><span style="color:#f9d849">(</span><span style="color:#f9d849">)</span><span style="color:#cccccc">;</span></div></div>
<div class="t" style="left:144.0px;top:1590.5px;font-size:24px;line-height:48px;color:#cccccc;font-weight:normal;font-style:normal;letter-spacing:0.55px;font-family:"Liberation Sans", sans-serif;">Launchpad</div>
<div class="t" style="left:336.0px;top:1590.5px;font-size:24px;line-height:48px;color:#cccccc;font-weight:normal;font-style:normal;letter-spacing:0px;font-family:"Liberation Sans", sans-serif;">0</div>
<div class="t" style="left:393.0px;top:1590.5px;font-size:24px;line-height:48px;color:#cccccc;font-weight:normal;font-style:normal;letter-spacing:0px;font-family:"Liberation Sans", sans-serif;">0</div>
<div class="t" style="left:474.6px;top:1590.5px;font-size:24px;line-height:48px;color:#cccccc;font-weight:normal;font-style:normal;letter-spacing:0px;font-family:"Liberation Sans", sans-serif;">0</div>
<div class="t" style="left:1720.7px;top:1590.5px;font-size:24px;line-height:48px;color:#cccccc;font-weight:normal;font-style:normal;letter-spacing:0.65px;font-family:"Liberation Sans", sans-serif;">Ln 26, Col 71</div>
<div class="t" style="left:1906.8px;top:1590.5px;font-size:24px;line-height:48px;color:#cccccc;font-weight:normal;font-style:normal;letter-spacing:0.6px;font-family:"Liberation Sans", sans-serif;">Spaces: 2</div>
<div class="t" style="left:2050.0px;top:1590.5px;font-size:24px;line-height:48px;color:#cccccc;font-weight:normal;font-style:normal;letter-spacing:0.6px;font-family:"Liberation Sans", sans-serif;">UTF-8</div>
<div class="t" style="left:2155.0px;top:1590.5px;font-size:24px;line-height:48px;color:#cccccc;font-weight:normal;font-style:normal;letter-spacing:0.6px;font-family:"Liberation Sans", sans-serif;">LF</div>
<div class="t" style="left:2212.0px;top:1590.5px;font-size:24px;line-height:48px;color:#cccccc;font-weight:normal;font-style:normal;letter-spacing:0px;font-family:"Liberation Sans", sans-serif;">{ }</div>
<div class="t" style="left:2250.0px;top:1590.5px;font-size:24px;line-height:48px;color:#cccccc;font-weight:normal;font-style:normal;letter-spacing:0.6px;font-family:"Liberation Sans", sans-serif;">Dart</div>
<div class="t" style="left:2327.0px;top:1590.5px;font-size:24px;line-height:48px;color:#cccccc;font-weight:normal;font-style:normal;letter-spacing:0.9px;font-family:"Liberation Sans", sans-serif;">RMX3761 (android-arm64)</div>
<div class="t" style="left:2704.0px;top:1590.5px;font-size:24px;line-height:48px;color:#cccccc;font-weight:normal;font-style:normal;letter-spacing:0.6px;font-family:"Liberation Sans", sans-serif;">Prettier</div>
</div></div>
<div id="border"></div>
</body></html>
